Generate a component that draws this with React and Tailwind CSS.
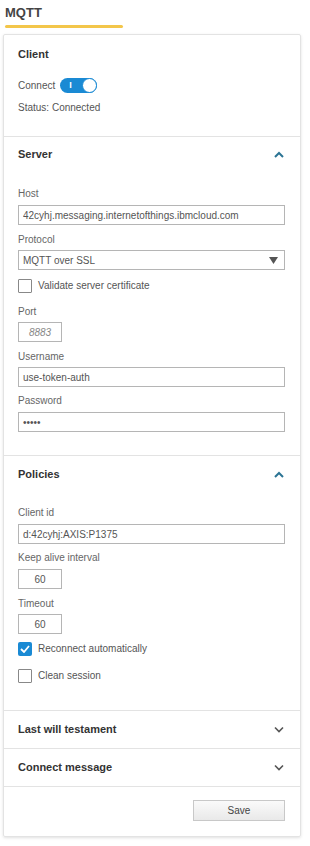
import React, { useState } from 'react'

const font = { fontFamily: '"Liberation Sans", Arial, sans-serif' }

function ChevronUp() {
  return (
    <svg width="10" height="7" viewBox="0 0 10 7">
      <path d="M1 6 L5 2 L9 6" fill="none" stroke="#2b7494" strokeWidth="2" />
    </svg>
  )
}

function ChevronDown() {
  return (
    <svg width="10" height="7" viewBox="0 0 10 7">
      <path d="M1 1.5 L5 5.5 L9 1.5" fill="none" stroke="#555" strokeWidth="1.6" />
    </svg>
  )
}

function Label({ children, className = '' }) {
  return <div className={'text-[10px] leading-[12px] text-[#666] ' + className}>{children}</div>
}

function TextInput({ value, small, className = '', type = 'text' }) {
  return (
    <input
      type={type}
      defaultValue={value}
      className={
        'block h-[20px] border border-[#b5b5b5] bg-white text-[10px] text-[#555] outline-none ' +
        (small ? 'w-[44px] text-center ' : 'w-full px-[4px] ') +
        className
      }
    />
  )
}

function Check({ checked, label, className = '' }) {
  return (
    <div className={'flex items-center ' + className}>
      {checked ? (
        <div className="w-[14px] h-[14px] rounded-[2px] bg-[#1a8ad4] flex items-center justify-center">
          <svg width="10" height="8" viewBox="0 0 10 8">
            <path d="M1 4 L4 7 L9 1" fill="none" stroke="white" strokeWidth="1.8" />
          </svg>
        </div>
      ) : (
        <div className="w-[14px] h-[14px] border border-[#888] bg-white rounded-[1px]" />
      )}
      <span className="ml-[6px] text-[10px] text-[#555]">{label}</span>
    </div>
  )
}

export default function App() {
  const [connected, setConnected] = useState(true)

  return (
    <div className="w-[310px] h-[846px] bg-white relative" style={font}>
      <div className="pl-[5px] pt-[5px]">
        <div className="text-[13px] font-bold text-[#444] leading-[15px]">MQTT</div>
        <div className="mt-[5px] w-[118px] h-[3px] bg-[#f3c64a] rounded-full" />
      </div>

      <div className="mt-[6px] ml-[3px] w-[298px] border border-[#e3e3e3] shadow-[0_1px_3px_rgba(0,0,0,0.12)] rounded-[2px]">
        {/* Client */}
        <div className="h-[102px] px-[14px] pt-[13px] border-b border-[#e3e3e3]">
          <div className="text-[11px] font-bold text-[#333] leading-[13px]">Client</div>
          <div className="mt-[17px] flex items-center h-[14px]">
            <span className="text-[10px] text-[#555]">Connect</span>
            <button
              type="button"
              onClick={() => setConnected(!connected)}
              className={
                'ml-[5px] w-[37px] h-[15px] rounded-full relative flex items-center ' +
                (connected ? 'bg-[#1a8ad4]' : 'bg-[#bbb]')
              }
            >
              <span className="ml-[9px] text-white text-[9px] font-bold leading-[9px]">I</span>
              <span className="absolute right-0 top-0 w-[15px] h-[15px] rounded-full bg-white border-[1.5px] border-[#1a8ad4]" />
            </button>
          </div>
          <div className="mt-[9px] text-[10px] text-[#555] leading-[13px]">Status: Connected</div>
        </div>

        {/* Server */}
        <div className="px-[14px] pr-[15px] pt-[11px] pb-[23px] border-b border-[#e3e3e3]">
          <div className="flex items-center justify-between h-[13px]">
            <span className="text-[11px] font-bold text-[#333]">Server</span>
            <span className="mr-[1px]"><ChevronUp /></span>
          </div>
          <Label className="mt-[27px]">Host</Label>
          <TextInput className="mt-[5px]" value="42cyhj.messaging.internetofthings.ibmcloud.com" />
          <Label className="mt-[9px]">Protocol</Label>
          <div className="mt-[4px] h-[20px] border border-[#b5b5b5] flex items-center justify-between px-[4px]">
            <span className="text-[10px] text-[#555]">MQTT over SSL</span>
            <svg width="9" height="7" viewBox="0 0 9 7" className="mr-[2px]">
              <path d="M0 0 L9 0 L4.5 7 Z" fill="#555" />
            </svg>
          </div>
          <Check className="mt-[8px]" label="Validate server certificate" />
          <Label className="mt-[13px]">Port</Label>
          <TextInput className="mt-[4px] italic text-[#888]" small value="8883" />
          <Label className="mt-[9px]">Username</Label>
          <TextInput className="mt-[4px]" value="use-token-auth" />
          <Label className="mt-[8px]">Password</Label>
          <TextInput className="mt-[5px]" type="password" value="xxxxx" />
        </div>

        {/* Policies */}
        <div className="px-[14px] pr-[15px] pt-[12px] pb-[27px] border-b border-[#e3e3e3]">
          <div className="flex items-center justify-between h-[13px]">
            <span className="text-[11px] font-bold text-[#333]">Policies</span>
            <span className="mr-[1px]"><ChevronUp /></span>
          </div>
          <Label className="mt-[26px]">Client id</Label>
          <TextInput className="mt-[5px]" value="d:42cyhj:AXIS:P1375" />
          <Label className="mt-[8px]">Keep alive interval</Label>
          <TextInput className="mt-[5px]" small value="60" />
          <Label className="mt-[9px]">Timeout</Label>
          <TextInput className="mt-[4px]" small value="60" />
          <Check className="mt-[7px]" checked label="Reconnect automatically" />
          <Check className="mt-[12px]" label="Clean session" />
        </div>

        {/* Collapsed sections */}
        <div className="h-[38px] px-[14px] pr-[15px] flex items-center justify-between border-b border-[#e3e3e3]">
          <span className="text-[11px] font-bold text-[#333]">Last will testament</span>
          <span className="mr-[1px]"><ChevronDown /></span>
        </div>
        <div className="h-[38px] px-[14px] pr-[15px] flex items-center justify-between border-b border-[#e3e3e3]">
          <span className="text-[11px] font-bold text-[#333]">Connect message</span>
          <span className="mr-[1px]"><ChevronDown /></span>
        </div>

        <div className="h-[49px] px-[15px] flex items-start justify-end pt-[13px]">
          <button
            type="button"
            className="w-[92px] h-[21px] border border-[#c8c8c8] bg-gradient-to-b from-[#fafafa] to-[#e9e9e9] text-[10px] text-[#444]"
          >
            Save
          </button>
        </div>
      </div>
    </div>
  )
}
